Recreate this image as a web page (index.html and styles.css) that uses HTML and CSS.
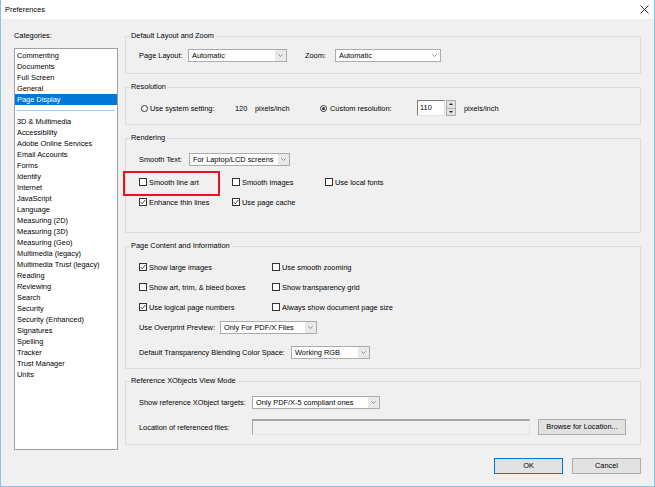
FILE: index.html
```html
<!DOCTYPE html>
<html>
<head>
<meta charset="utf-8">
<title>Preferences</title>
<link rel="stylesheet" href="styles.css">
</head>
<body>
<div class="window">
  <div class="titlebar">
    <span class="title">Preferences</span>
    <svg class="close" width="9" height="9" viewBox="0 0 9 9"><path d="M0.5 0.5 L8.5 8.5 M8.5 0.5 L0.5 8.5" stroke="#333" stroke-width="1" fill="none"/></svg>
  </div>
  <div class="content">
    <div class="sidebar">
      <div class="cat-label">Categories:</div>
      <ul class="list">
        <li>Commenting</li>
        <li>Documents</li>
        <li>Full Screen</li>
        <li>General</li>
        <li class="sel">Page Display</li>
        <li class="sep"><span class="sep-line"></span></li>
        <li>3D &amp; Multimedia</li>
        <li>Accessibility</li>
        <li>Adobe Online Services</li>
        <li>Email Accounts</li>
        <li>Forms</li>
        <li>Identity</li>
        <li>Internet</li>
        <li>JavaScript</li>
        <li>Language</li>
        <li>Measuring (2D)</li>
        <li>Measuring (3D)</li>
        <li>Measuring (Geo)</li>
        <li>Multimedia (legacy)</li>
        <li>Multimedia Trust (legacy)</li>
        <li>Reading</li>
        <li>Reviewing</li>
        <li>Search</li>
        <li>Security</li>
        <li>Security (Enhanced)</li>
        <li>Signatures</li>
        <li>Spelling</li>
        <li>Tracker</li>
        <li>Trust Manager</li>
        <li>Units</li>
      </ul>
    </div>
    <div class="main">
      <section class="group g1">
        <div class="gtitle">Default Layout and Zoom</div>
        <div class="row r-layout">
          <span class="lbl w-pl">Page Layout:</span>
          <div class="select w-pls"><span class="val">Automatic</span><span class="arr"><svg width="5" height="3" viewBox="0 0 5 3"><polyline points="0.3,0.3 2.5,2.5 4.7,0.3" stroke="#7a7a7a" stroke-width="0.8" fill="none"/></svg></span></div>
          <span class="lbl w-zl">Zoom:</span>
          <div class="select plain w-zs"><span class="val">Automatic</span><span class="arr"><svg width="5" height="3" viewBox="0 0 5 3"><polyline points="0.3,0.3 2.5,2.5 4.7,0.3" stroke="#7a7a7a" stroke-width="0.8" fill="none"/></svg></span></div>
        </div>
      </section>

      <section class="group g2">
        <div class="gtitle">Resolution</div>
        <div class="row r-res">
          <span class="opt1"><span class="radio"></span><span class="rlbl">Use system setting:</span></span>
          <span class="num">120</span>
          <span class="unit">pixels/inch</span>
          <span class="opt2"><span class="radio on"></span><span class="rlbl">Custom resolution:</span></span>
          <span class="spin-input">110</span>
          <span class="spinner"><span class="sp up"><span class="tri-up"></span></span><span class="sp down"><span class="tri-down"></span></span></span>
          <span class="unit2">pixels/inch</span>
        </div>
      </section>

      <section class="group g3">
        <div class="gtitle">Rendering</div>
        <div class="row r-smooth">
          <span class="lbl w-st">Smooth Text:</span>
          <div class="select w-sts"><span class="val">For Laptop/LCD screens</span><span class="arr"><svg width="5" height="3" viewBox="0 0 5 3"><polyline points="0.3,0.3 2.5,2.5 4.7,0.3" stroke="#7a7a7a" stroke-width="0.8" fill="none"/></svg></span></div>
        </div>
        <div class="checks c3">
          <label class="check hl"><span class="cb"></span><span>Smooth line art</span></label>
          <label class="check"><span class="cb"></span><span>Smooth images</span></label>
          <label class="check"><span class="cb"></span><span>Use local fonts</span></label>
          <label class="check"><span class="cb"><svg width="6" height="6" viewBox="0 0 6 6"><polyline points="0.6,3 2.3,4.8 5.4,0.9" stroke="#333" stroke-width="0.9" fill="none"/></svg></span><span>Enhance thin lines</span></label>
          <label class="check"><span class="cb"><svg width="6" height="6" viewBox="0 0 6 6"><polyline points="0.6,3 2.3,4.8 5.4,0.9" stroke="#333" stroke-width="0.9" fill="none"/></svg></span><span>Use page cache</span></label>
        </div>
      </section>

      <section class="group g4">
        <div class="gtitle">Page Content and Information</div>
        <div class="checks c2">
          <label class="check"><span class="cb"><svg width="6" height="6" viewBox="0 0 6 6"><polyline points="0.6,3 2.3,4.8 5.4,0.9" stroke="#333" stroke-width="0.9" fill="none"/></svg></span><span>Show large images</span></label>
          <label class="check"><span class="cb"></span><span>Use smooth zooming</span></label>
          <label class="check"><span class="cb"></span><span>Show art, trim, &amp; bleed boxes</span></label>
          <label class="check"><span class="cb"></span><span>Show transparency grid</span></label>
          <label class="check"><span class="cb"><svg width="6" height="6" viewBox="0 0 6 6"><polyline points="0.6,3 2.3,4.8 5.4,0.9" stroke="#333" stroke-width="0.9" fill="none"/></svg></span><span>Use logical page numbers</span></label>
          <label class="check"><span class="cb"></span><span>Always show document page size</span></label>
        </div>
        <div class="row r-over">
          <span class="lbl w-ov">Use Overprint Preview:</span>
          <div class="select w-ovs"><span class="val">Only For PDF/X Files</span><span class="arr"><svg width="5" height="3" viewBox="0 0 5 3"><polyline points="0.3,0.3 2.5,2.5 4.7,0.3" stroke="#7a7a7a" stroke-width="0.8" fill="none"/></svg></span></div>
        </div>
        <div class="row r-blend">
          <span class="lbl w-bl">Default Transparency Blending Color Space:</span>
          <div class="select w-bls"><span class="val">Working RGB</span><span class="arr"><svg width="5" height="3" viewBox="0 0 5 3"><polyline points="0.3,0.3 2.5,2.5 4.7,0.3" stroke="#7a7a7a" stroke-width="0.8" fill="none"/></svg></span></div>
        </div>
      </section>

      <section class="group g5">
        <div class="gtitle">Reference XObjects View Mode</div>
        <div class="row r-xobj">
          <span class="lbl w-xo">Show reference XObject targets:</span>
          <div class="select w-xos"><span class="val">Only PDF/X-5 compliant ones</span><span class="arr"><svg width="5" height="3" viewBox="0 0 5 3"><polyline points="0.3,0.3 2.5,2.5 4.7,0.3" stroke="#7a7a7a" stroke-width="0.8" fill="none"/></svg></span></div>
        </div>
        <div class="row r-loc">
          <span class="lbl w-xo">Location of referenced files:</span>
          <span class="loc-input"></span>
          <button class="btn browse">Browse for Location...</button>
        </div>
      </section>

      <div class="actions">
        <button class="btn primary">OK</button>
        <button class="btn">Cancel</button>
      </div>
    </div>
  </div>
</div>
</body>
</html>
```

FILE: styles.css
```css
* { box-sizing: border-box; }
html, body { margin: 0; padding: 0; }
body {
  font-family: "Liberation Sans", Arial, sans-serif;
  font-size: 7.4px;
  color: #000;
  background: #ffffff;
}
.window {
  width: 655px;
  height: 487px;
  border: 1px solid #86c5e3;
  border-top: 0;
  background: #f0f0f0;
  display: flex;
  flex-direction: column;
}
.titlebar {
  height: 19px;
  flex: none;
  background: #fff;
  display: flex;
  align-items: center;
  justify-content: space-between;
  padding: 0 5px 0 4px;
}
.close { display: block; }
.content {
  display: flex;
  gap: 7px;
  padding: 0 13px;
}
.sidebar {
  width: 104px;
  flex: none;
  padding-top: 11px;
}
.cat-label { line-height: 12px; }
.list {
  list-style: none;
  margin: 6px 0 0 0;
  padding: 1px 0 0 0;
  height: 402px;
  border: 1px solid #a0a0a0;
  background: #fff;
}
.list li {
  line-height: 11px;
  height: 11px;
  padding-left: 2px;
  white-space: nowrap;
}
.list li.sel { background: #0078d7; color: #fff; }
.list li.sep { padding: 5px 2px 0 2px; }
.sep-line {
  display: block;
  height: 1px;
  background: #a9cde8;
}
.main {
  width: 516px;
  flex: none;
  padding-top: 17px;
}
.group {
  border: 1px solid #dcdcdc;
  padding: 0 13px;
}
.gtitle {
  display: table;
  margin: -7px 0 0 -9px;
  padding: 0 2px 0 1px;
  line-height: 12px;
  background: #f0f0f0;
}
.g1 { padding-bottom: 11px; }
.g2 { margin-top: 13px; padding-bottom: 8px; }
.g3 { margin-top: 13px; padding-bottom: 20px; }
.g4 { margin-top: 13px; padding-bottom: 9px; }
.g5 { margin-top: 12px; padding-bottom: 9px; }

.row { display: flex; align-items: center; height: 13px; white-space: nowrap; }
.lbl { flex: none; }
.r-layout { margin-top: 7px; }
.w-pl { width: 49px; }
.w-pls { width: 99px; }
.w-zl { width: 30px; margin-left: 18px; }
.w-zs { width: 106px; }

.select {
  flex: none;
  height: 13px;
  background: #fff;
  border: 1px solid #acacac;
  display: flex;
  align-items: center;
  justify-content: space-between;
  overflow: hidden;
}
.select .val { padding-left: 3px; line-height: 11px; }
.select .arr {
  width: 11px;
  height: 100%;
  display: flex;
  align-items: center;
  justify-content: center;
  background: #e9e9e9;
}
.select .arr svg { display: block; }
.select.plain .arr { background: transparent; }

/* resolution */
.r-res { margin-top: 7px; height: 16px; }
.opt1, .opt2 { display: flex; align-items: center; flex: none; }
.opt1 { width: 96px; }
.opt2 { width: 97px; }
.radio {
  width: 7px;
  height: 7px;
  border: 1px solid #333;
  border-radius: 50%;
  background: #fff;
  margin-left: 2px;
  margin-right: 2px;
  display: flex;
  align-items: center;
  justify-content: center;
  flex: none;
}
.opt2 .radio { margin-left: 0; margin-right: 3px; }
.radio.on::after {
  content: "";
  width: 3px;
  height: 3px;
  border-radius: 50%;
  background: #333;
}
.num { width: 20px; flex: none; }
.unit { width: 65px; flex: none; }
.spin-input {
  flex: none;
  width: 28px;
  height: 16px;
  background: #fff;
  border: 1px solid;
  border-color: #7a7a7a #e3e3e3 #e3e3e3 #7a7a7a;
  padding-left: 2px;
  line-height: 14px;
}
.spinner {
  flex: none;
  width: 10px;
  height: 16px;
  margin-left: 1px;
  display: flex;
  flex-direction: column;
}
.sp {
  flex: 1;
  background: #e1e1e1;
  border: 1px solid #adadad;
  display: flex;
  align-items: center;
  justify-content: center;
}
.sp.down { border-top: 0; }
.tri-up { width: 0; height: 0; border-left: 2px solid transparent; border-right: 2px solid transparent; border-bottom: 2px solid #222; }
.tri-down { width: 0; height: 0; border-left: 2px solid transparent; border-right: 2px solid transparent; border-top: 2px solid #222; }
.unit2 { margin-left: 8px; }

/* rendering */
.r-smooth { margin-top: 9px; }
.w-st { width: 50px; }
.w-sts { width: 101px; }

.checks { display: grid; grid-auto-rows: 20px; }
.c3 { grid-template-columns: 93px 93px auto; margin-top: 6px; }
.c2 { grid-template-columns: 133px auto; margin-top: 5px; }
.check {
  display: flex;
  align-items: center;
  gap: 2px;
  white-space: nowrap;
}
.cb {
  width: 8px;
  height: 8px;
  flex: none;
  border: 1px solid #333;
  background: #fff;
  display: flex;
  align-items: center;
  justify-content: center;
}
.cb svg { display: block; }
.hl { position: relative; }
.hl::after {
  content: "";
  position: absolute;
  left: -16px;
  top: -1px;
  width: 93px;
  height: 21px;
  border: 2px solid #e81123;
}

/* page content */
.r-over { margin-top: 4px; }
.w-ov { width: 81px; }
.w-ovs { width: 97px; }
.r-blend { margin-top: 12px; }
.w-bl { width: 152px; }
.w-bls { width: 79px; }

/* xobjects */
.r-xobj { margin-top: 9px; }
.w-xo { width: 113px; }
.w-xos { width: 128px; }
.r-loc { margin-top: 10px; height: 16px; }
.loc-input {
  flex: none;
  width: 278px;
  height: 16px;
  background: #f0f0f0;
  border: 1px solid;
  border-color: #a6a6a6 #e3e3e3 #e3e3e3 #a6a6a6;
  border-top-width: 2px;
}

.btn {
  font-family: inherit;
  font-size: inherit;
  color: #000;
  height: 16px;
  background: #e1e1e1;
  border: 1px solid #adadad;
  padding: 0;
  margin: 0;
  line-height: 14px;
  flex: none;
}
.browse { width: 88px; margin-left: 8px; }
.actions {
  display: flex;
  justify-content: flex-end;
  gap: 9px;
  margin-top: 13px;
}
.actions .btn { width: 69px; }
.btn.primary { border-color: #0078d7; }
```
